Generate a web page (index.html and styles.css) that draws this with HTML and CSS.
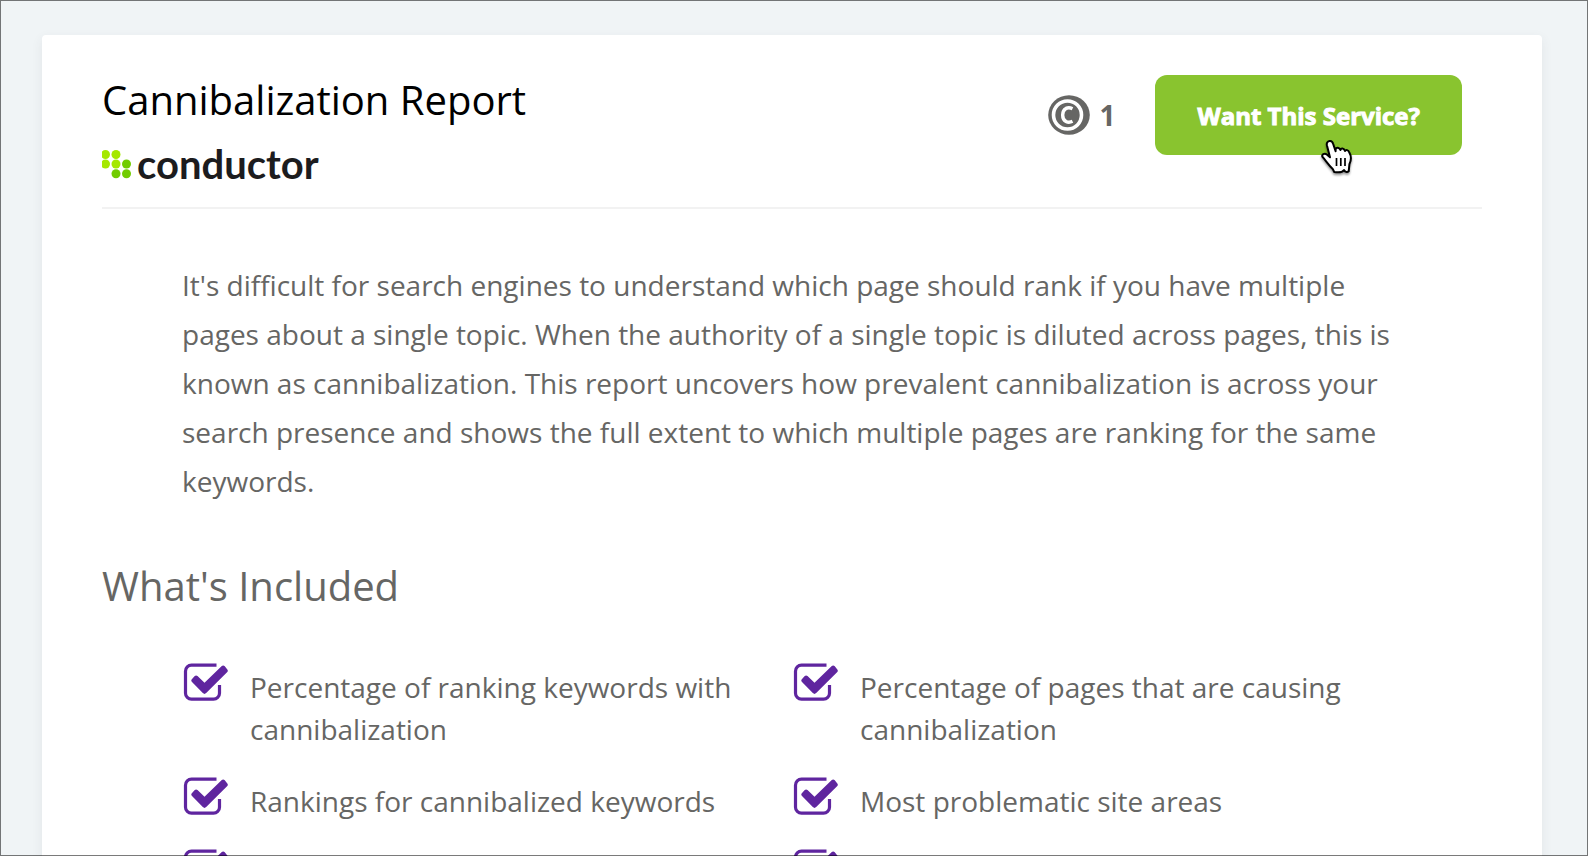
FILE: index.html
```html
<!DOCTYPE html>
<html lang="en">
<head>
<meta charset="utf-8">
<title>Cannibalization Report</title>
<link rel="stylesheet" href="styles.css">
</head>
<body>
<svg class="sprite" aria-hidden="true">
  <symbol id="check" viewBox="0 0 46 38">
    <g transform="translate(2 .5)">
    <path d="M32.500 1.700H7.500a6 6 0 0 0-6 6v22a6 6 0 0 0 6 6h22a6 6 0 0 0 6-6V21.500" fill="none" stroke="#5f259f" stroke-width="3.200"/>
    <path d="M37.500 2.800 20.500 19.200 13.500 12.600Q12 11.400 10.500 12.800L7.600 16Q6.800 17.400 8 18.600L18.800 29.600Q20.500 31.200 22.200 29.600L43.300 8.500Q44.300 7.200 43.300 6L40.800 2.800Q39.200 1.200 37.500 2.800Z" fill="#5f259f"/>
    </g>
  </symbol>
</svg>
<main class="card">
  <header class="card-header">
    <div class="heading">
      <h1 class="title">Cannibalization Report</h1>
      <div class="brand">
        <svg class="brand-mark" width="29" height="30" viewBox="0 0 29 30" aria-hidden="true">
          <g fill="#a5e800"><circle cx="3.500" cy="5.500" r="4.500"/><circle cx="14" cy="5.500" r="4.500"/><circle cx="3.500" cy="15" r="4.500"/><circle cx="14" cy="15" r="4.500"/></g>
          <g fill="#71cc00"><circle cx="24.500" cy="15" r="4.500"/><circle cx="14" cy="24.800" r="4.500"/><circle cx="24.500" cy="24.800" r="4.500"/></g>
        </svg>
        <span class="brand-name">conductor</span>
      </div>
    </div>
    <div class="actions">
      <div class="credits">
        <svg width="42" height="40" viewBox="0 0 42 40" aria-hidden="true">
          <ellipse cx="21" cy="20" rx="20.800" ry="19.800" fill="#666664"/>
          <circle cx="19.500" cy="20" r="14" fill="#666664" stroke="#fff" stroke-width="3.600"/>
          <path d="M24.500 13.700Q21 12 18 13.400C13.500 15.800 13.600 24.200 18 26.500Q21 28 24.500 26.300" fill="none" stroke="#fff" stroke-width="3.400"/>
        </svg>
        <span>1</span>
      </div>
      <button class="cta" type="button">Want This Service?
        <svg class="pointer" width="34" height="38" viewBox="0 0 34 38" aria-hidden="true">
          <path d="M9.500 2C11.400 1.600 12.600 3 13.100 4.700L15.600 12.300V10.300C16.200 8 19.500 8.100 20.400 11C20.900 8.700 24 8.800 25 12C25.900 10.300 28.300 10.800 29.300 13.500C31.400 17 31.200 21.500 29.400 25.300L28.700 32.300C27.100 33.700 25.200 32.900 24 31.100C22.100 33.700 18.500 33.700 14.200 33L12.700 29.900C8.600 26.200 6 21.900 2.500 17.900C1.200 15.700 4.500 13.700 6.800 15.500L10 18.300L6.900 6.300C6.400 4 7.400 2.400 9.500 2Z" fill="#fff" stroke="#000" stroke-width="2" stroke-linejoin="round"/>
          <path d="M16.500 19v8M20.800 19v8M25 19v8" stroke="#000" stroke-width="1.700"/>
        </svg>
      </button>
    </div>
  </header>
  <p class="description">It's difficult for search engines to understand which page should rank if you have multiple pages about a single topic. When the authority of a single topic is diluted across pages, this is known as cannibalization. This report uncovers how prevalent cannibalization is across your search presence and shows the full extent to which multiple pages are ranking for the same keywords.</p>
  <h2 class="subtitle">What's Included</h2>
  <ul class="features">
    <li class="feature"><svg class="check"><use href="#check"/></svg><span class="feature-text">Percentage of ranking keywords with cannibalization</span></li>
    <li class="feature"><svg class="check"><use href="#check"/></svg><span class="feature-text">Percentage of pages that are causing cannibalization</span></li>
    <li class="feature"><svg class="check"><use href="#check"/></svg><span class="feature-text">Rankings for cannibalized keywords</span></li>
    <li class="feature"><svg class="check"><use href="#check"/></svg><span class="feature-text">Most problematic site areas</span></li>
    <li class="feature"><svg class="check"><use href="#check"/></svg></li>
    <li class="feature"><svg class="check"><use href="#check"/></svg></li>
  </ul>
</main>
<div class="frame"></div>
</body>
</html>
```
FILE: styles.css
```css
* { box-sizing: border-box; }
html { height: 100%; overflow: hidden; }
body {
  margin: 0;
  height: 100%;
  overflow: hidden;
  padding: 35px 46px 0 42px;
  background: #f0f4f6;
  color: #666664;
  font-family: "Open Sans", "Noto Sans", sans-serif;
}
.sprite { position: absolute; width: 0; height: 0; }
.frame {
  position: fixed;
  inset: 0;
  border: 1px solid rgba(0, 0, 0, 0.52);
  pointer-events: none;
}
.card {
  padding: 40px 60px 60px;
  background: #fff;
  border-radius: 4px;
  box-shadow: 0 4px 12px rgba(60, 70, 80, 0.08);
}
.card-header {
  display: flex;
  justify-content: space-between;
  align-items: flex-start;
  padding: 0 20px 24px 0;
  border-bottom: 2px solid #f2f2f2;
}
.title {
  margin: 0;
  color: #000;
  font-size: 40px;
  line-height: 50px;
  font-weight: 400;
}
.brand {
  display: flex;
  align-items: center;
  gap: 6px;
  height: 38px;
  margin-top: 20px;
}
.brand-name {
  color: #1c1c1e;
  font-family: Lato, sans-serif;
  font-size: 40px;
  line-height: 38px;
  font-weight: 700;
}
.actions { display: flex; align-items: center; gap: 40px; }
.credits {
  display: flex;
  align-items: center;
  gap: 9px;
  font-size: 28px;
  font-weight: 700;
}
.cta {
  position: relative;
  height: 80px;
  padding: 0 42px;
  border: 0;
  border-radius: 12px;
  background: #89c42f;
  color: #fff;
  font-family: inherit;
  font-size: 24px;
  font-weight: 700;
  -webkit-text-stroke: 1px #fff;
  cursor: pointer;
}
.pointer {
  position: absolute;
  right: 108px;
  bottom: -22px;
  filter: drop-shadow(0 2px 1px rgba(0, 0, 0, 0.4));
}
.description {
  margin: 52px 80px 0;
  font-size: 28px;
  line-height: 49px;
}
.subtitle {
  margin: 50px 0 0;
  font-size: 40px;
  line-height: 60px;
  font-weight: 400;
}
.features {
  display: grid;
  grid-template-columns: 1fr 1fr;
  row-gap: 30px;
  margin: 47px 80px 0;
  padding: 0;
  list-style: none;
}
.feature {
  display: flex;
  align-items: flex-start;
  gap: 22px;
  min-height: 42px;
}
.check { flex: none; width: 46px; height: 38px; }
.feature-text {
  padding-right: 30px;
  margin: 3px 0 -3px;
  font-size: 28px;
  line-height: 42px;
}
```
